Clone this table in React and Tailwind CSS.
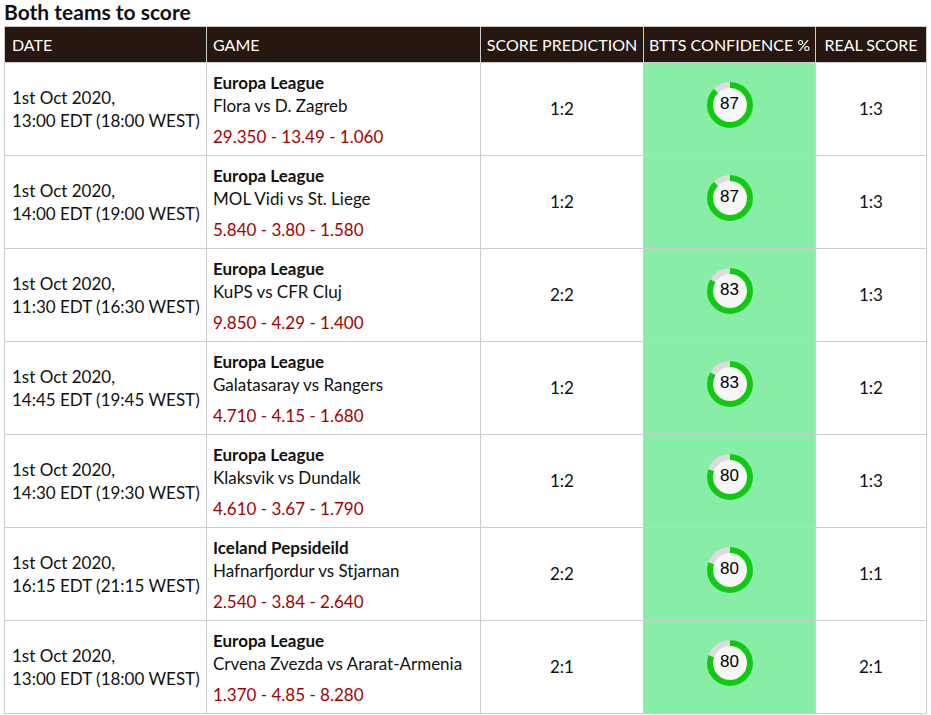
const rows = [
  { date: '13:00 EDT (18:00 WEST)', league: 'Europa League', game: 'Flora vs D. Zagreb', odds: '29.350 - 13.49 - 1.060', pred: '1:2', conf: 87, real: '1:3' },
  { date: '14:00 EDT (19:00 WEST)', league: 'Europa League', game: 'MOL Vidi vs St. Liege', odds: '5.840 - 3.80 - 1.580', pred: '1:2', conf: 87, real: '1:3' },
  { date: '11:30 EDT (16:30 WEST)', league: 'Europa League', game: 'KuPS vs CFR Cluj', odds: '9.850 - 4.29 - 1.400', pred: '2:2', conf: 83, real: '1:3' },
  { date: '14:45 EDT (19:45 WEST)', league: 'Europa League', game: 'Galatasaray vs Rangers', odds: '4.710 - 4.15 - 1.680', pred: '1:2', conf: 83, real: '1:2' },
  { date: '14:30 EDT (19:30 WEST)', league: 'Europa League', game: 'Klaksvik vs Dundalk', odds: '4.610 - 3.67 - 1.790', pred: '1:2', conf: 80, real: '1:3' },
  { date: '16:15 EDT (21:15 WEST)', league: 'Iceland Pepsideild', game: 'Hafnarfjordur vs Stjarnan', odds: '2.540 - 3.84 - 2.640', pred: '2:2', conf: 80, real: '1:1' },
  { date: '13:00 EDT (18:00 WEST)', league: 'Europa League', game: 'Crvena Zvezda vs Ararat-Armenia', odds: '1.370 - 4.85 - 8.280', pred: '2:1', conf: 80, real: '2:1' },
]

function Donut({ value }) {
  const r = 20
  const c = 2 * Math.PI * r
  return (
    <div className="relative w-[46px] h-[46px] mx-auto -mt-2">
      <svg width="46" height="46" viewBox="0 0 46 46">
        <circle cx="23" cy="23" r="20" fill="#f7f7f7" stroke="#dcdcdc" strokeWidth="6" />
        <circle
          cx="23" cy="23" r="20" fill="none" stroke="#0fcb0f" strokeWidth="6"
          strokeDasharray={`${(c * value) / 100} ${c}`}
          transform="rotate(-90 23 23)"
        />
      </svg>
      <span className="absolute inset-0 flex items-center justify-center text-[17px] text-black font-['Liberation_Sans',sans-serif] -mt-[2px]">{value}</span>
    </div>
  )
}

export default function App() {
  return (
    <div className="bg-white w-[931px] h-[715px] overflow-hidden font-['Lato',sans-serif] text-[17px] text-[#111]">
      <h2 className="pl-[4px] text-[21px] font-bold leading-[24px] h-[26px]">Both teams to score</h2>
      <table className="ml-[4px] w-[922px] border-collapse table-fixed">
        <colgroup>
          <col className="w-[202px]" />
          <col className="w-[274px]" />
          <col className="w-[163px]" />
          <col className="w-[172px]" />
          <col className="w-[111px]" />
        </colgroup>
        <thead>
          <tr className="bg-[#261710] text-white h-[36px] text-[16px]">
            <th className="border border-[#ccc] text-left font-normal px-[7px]">DATE</th>
            <th className="border border-[#ccc] text-left font-normal px-[6px]">GAME</th>
            <th className="border border-[#ccc] font-normal px-[4px] whitespace-nowrap">SCORE PREDICTION</th>
            <th className="border border-[#ccc] font-normal px-[4px] whitespace-nowrap">BTTS CONFIDENCE %</th>
            <th className="border border-[#ccc] font-normal px-[4px] whitespace-nowrap">REAL SCORE</th>
          </tr>
        </thead>
        <tbody>
          {rows.map((r, i) => (
            <tr key={i} className="h-[93px]">
              <td className="border border-[#ccc] pl-[7px] pr-0 leading-[23px] whitespace-nowrap">
                1st Oct 2020,<br />{r.date}
              </td>
              <td className="border border-[#ccc] px-[6px] whitespace-nowrap">
                <div className="font-bold leading-[23px]">{r.league}</div>
                <div className="leading-[23px]">{r.game}</div>
                <div className="text-[#a50000] leading-[23px] mt-[8px]">{r.odds}</div>
              </td>
              <td className="border border-[#ccc] text-center">{r.pred}</td>
              <td className="border border-[#ccc] bg-[#88eda6] text-center">
                <Donut value={r.conf} />
              </td>
              <td className="border border-[#ccc] text-center">{r.real}</td>
            </tr>
          ))}
        </tbody>
      </table>
    </div>
  )
}
